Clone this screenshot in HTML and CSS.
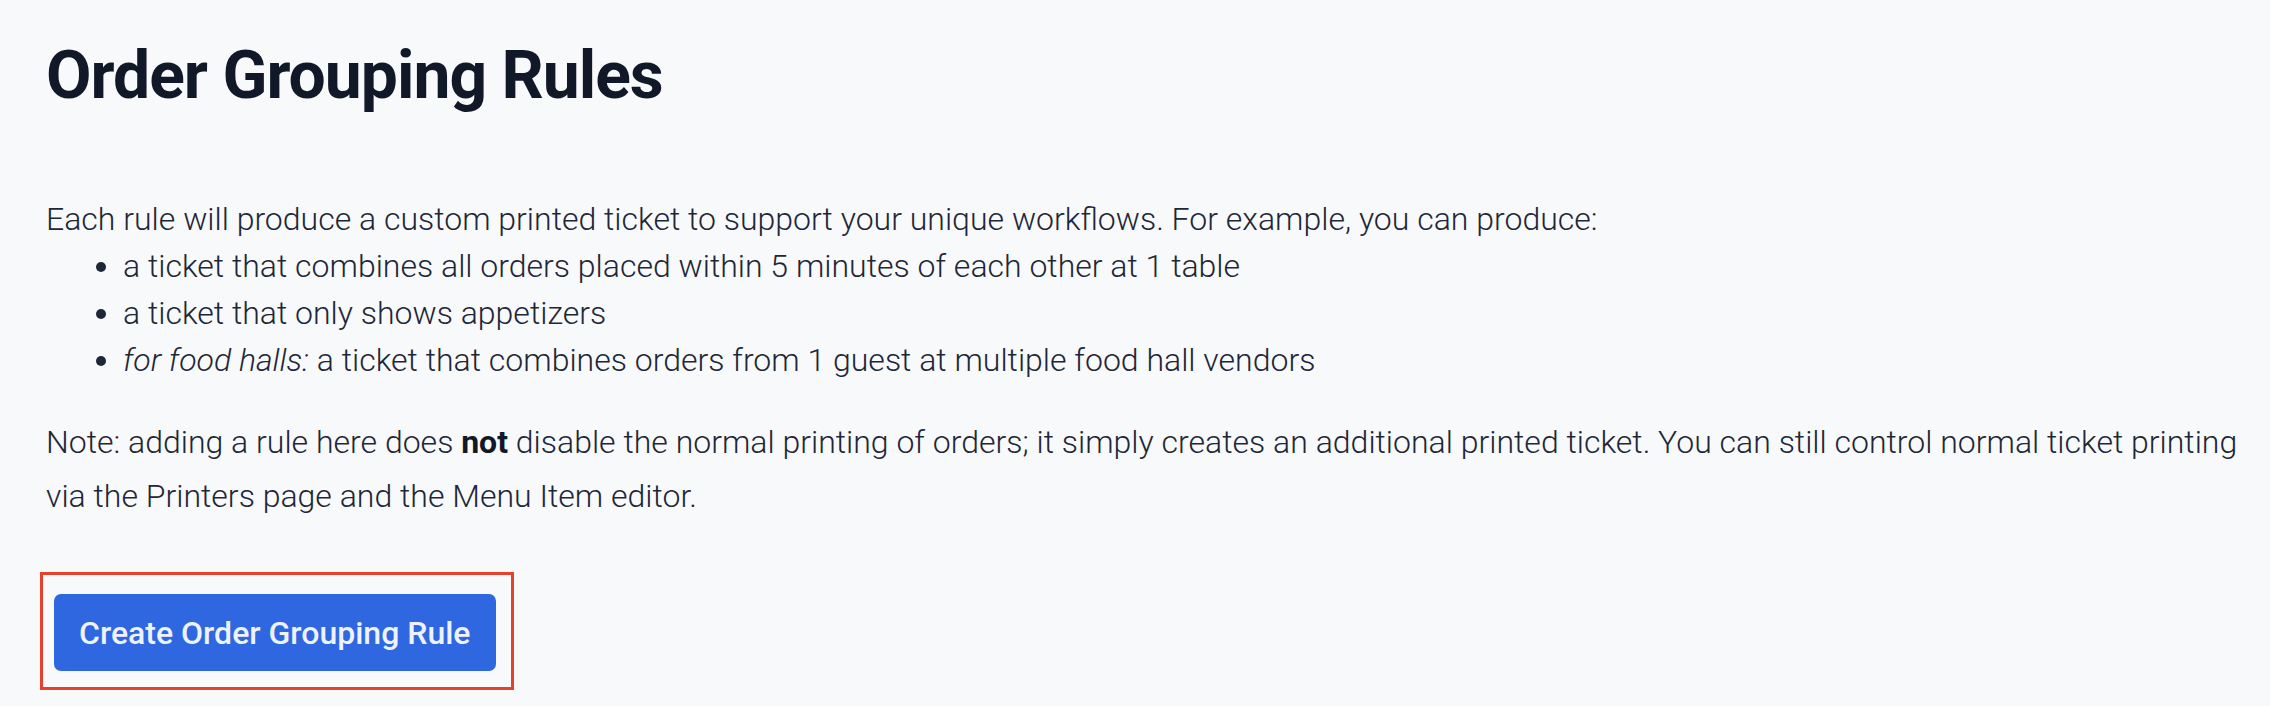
FILE: index.html
```html
<!DOCTYPE html>
<html lang="en">
<head>
<meta charset="utf-8">
<title>Order Grouping Rules</title>
<link rel="stylesheet" href="styles.css">
</head>
<body>
<main class="page">
  <h1 class="title">Order Grouping Rules</h1>
  <div class="intro">
    <p class="lead">Each rule will produce a custom printed ticket to support your unique workflows. For example, you can produce:</p>
    <ul class="examples">
      <li>a ticket that combines all orders placed within 5 minutes of each other at 1 table</li>
      <li>a ticket that only shows appetizers</li>
      <li><em>for food halls:</em> a ticket that combines orders from 1 guest at multiple food hall vendors</li>
    </ul>
  </div>
  <p class="note">Note: adding a rule here does <strong>not</strong> disable the normal printing of orders; it simply creates an additional printed ticket. You can still control normal ticket printing via the Printers page and the Menu Item editor.</p>
  <div class="highlight">
    <button class="primary" type="button">Create Order Grouping Rule</button>
  </div>
</main>
</body>
</html>
```

FILE: styles.css
```css
html, body {
  margin: 0;
  padding: 0;
}
body {
  background: #f8f9fb;
  color: #1e2737;
  font-family: Roboto, "Noto Sans", sans-serif;
  width: 2270px;
  height: 706px;
  overflow: hidden;
}
.page {
  padding: 0 30px 0 46px;
}
.title {
  margin: 0;
  padding-top: 36px;
  font-size: 66px;
  line-height: 80px;
  font-weight: 700;
  letter-spacing: -1px;
  color: #111827;
}
.intro {
  margin-top: 80px;
  font-size: 32px;
  font-weight: 300;
  line-height: 47px;
}
.lead {
  margin: 0;
}
.examples {
  margin: 0;
  padding-left: 77px;
}
.examples em {
  font-style: italic;
}
.note {
  margin: 32px 0 0 0;
  font-size: 32px;
  font-weight: 300;
  line-height: 53.5px;
}
.note strong {
  font-weight: 700;
  color: #111827;
}
.highlight {
  display: inline-flex;
  margin: 49px 0 0 -6px;
  padding: 19px 15px 16px 11px;
  border: 3px solid #e8402a;
}
.primary {
  font-family: Roboto, "Noto Sans", sans-serif;
  font-size: 32px;
  font-weight: 500;
  color: #eef2fc;
  background: #2f67e0;
  border: none;
  border-radius: 7px;
  height: 77px;
  padding: 0 25px;
  cursor: pointer;
}
```
